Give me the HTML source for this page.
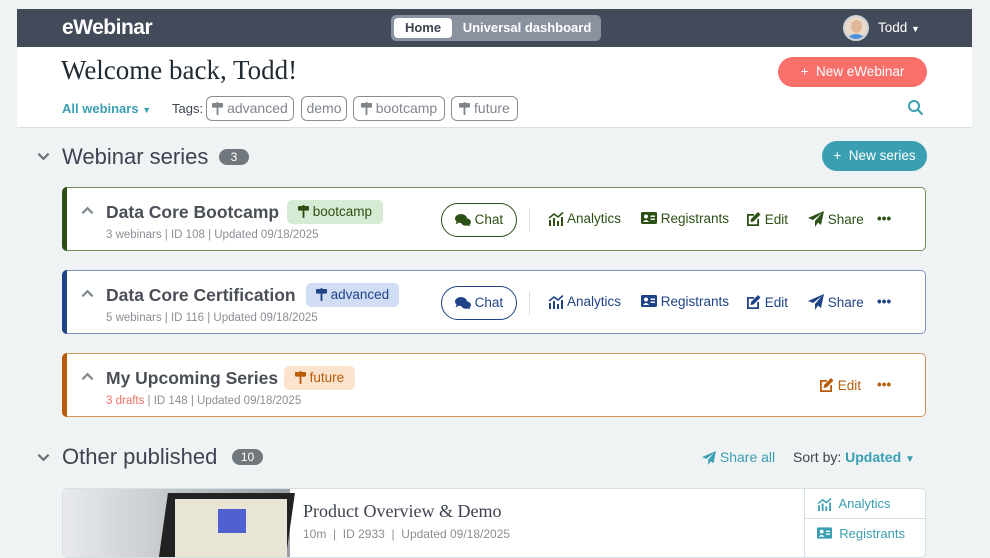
<!DOCTYPE html>
<html><head><meta charset="utf-8"><style>
*{box-sizing:border-box;margin:0;padding:0}
body{width:990px;height:555px;overflow:hidden;background:#eff3f4;font-family:"Liberation Sans",sans-serif;position:relative;color:#3d4350}
.abs{position:absolute}
svg.i{display:inline-block;vertical-align:-3px;fill:currentColor}
.hdr{left:17px;top:9px;width:955px;height:38px;background:#434b5a}
.logo{left:62px;top:16px;color:#fff;font-weight:bold;font-size:21px;letter-spacing:-0.5px}
.tabs{left:391px;top:15px;width:210px;height:26px;background:#8a92a0;border-radius:5px}
.tab{position:absolute;top:3px;height:20px;font-size:13px;line-height:20px;text-align:center;font-weight:bold}
.white{left:17px;top:47px;width:955px;height:81px;background:#fff;border-bottom:1px solid #d5e0e2}
.welcome{left:61px;top:55px;font-family:"Liberation Serif",serif;font-size:27px;color:#1f2a33}
.btn{border-radius:16px;color:#fff;font-size:13.5px;text-align:center}
.tag{top:96px;height:25px;border:1px solid #8a8f95;border-radius:6px;font-size:14px;color:#80868c;line-height:23px;text-align:center}
.sec{font-size:22px;color:#3d4350}
.badge{background:#70787d;color:#fff;border-radius:9px;font-size:12px;text-align:center}
.card{left:62px;width:864px;height:64px;background:#fff;border-radius:5px;border:1px solid}
.card .bar{position:absolute;left:-1px;top:-1px;bottom:-1px;width:5px;border-radius:5px 0 0 5px}
.ttl{position:absolute;left:43px;top:14px;font-size:17.5px;font-weight:bold;color:#4a4f57}
.meta{position:absolute;left:43px;top:41px;font-size:11.5px;color:#8a8f95}
.chev{position:absolute;left:18px;top:18px}
.pill{position:absolute;top:12px;height:24px;border-radius:5px;font-size:13.5px;line-height:24px;text-align:center}
.act{position:absolute;top:23px;font-size:13.5px}
.chat{position:absolute;left:378px;top:15px;width:76px;height:34px;border:1px solid;border-radius:17px;font-size:13.5px;line-height:32px;text-align:center}
.sep{position:absolute;left:466px;top:20px;width:1px;height:24px;background:#d8dde0}
</style></head><body>
<svg width="0" height="0" style="position:absolute">
<defs>
<symbol id="sign" viewBox="0 0 12 14"><rect x="0" y="1" width="12" height="5" rx="1"/><rect x="5" y="0" width="2" height="14"/></symbol>
<symbol id="chat" viewBox="0 0 16 14"><ellipse cx="6" cy="5.5" rx="6" ry="4.5"/><path d="M1.5 8.5 L0.5 11.5 L4 9.5Z"/><ellipse cx="11" cy="9" rx="5" ry="3.8"/><path d="M14 11 L15.5 13.5 L12 12Z"/></symbol>
<symbol id="ana" viewBox="0 0 16 14"><rect x="1" y="8" width="2" height="6"/><rect x="5" y="6" width="2" height="8"/><rect x="9" y="9" width="2" height="5"/><rect x="13" y="5" width="2" height="9"/><path d="M1 6 L6 2 L10 5 L15 0.5" fill="none" stroke="currentColor" stroke-width="1.6"/></symbol>
<symbol id="reg" viewBox="0 0 16 12"><rect x="0" y="0" width="16" height="12" rx="1.5"/><circle cx="5" cy="4.5" r="2" fill="#fff"/><path d="M2 10 Q5 6 8 10Z" fill="#fff"/><rect x="9.5" y="3.5" width="4.5" height="1.4" fill="#fff"/><rect x="9.5" y="6.5" width="4.5" height="1.4" fill="#fff"/></symbol>
<symbol id="edit" viewBox="0 0 16 16"><path d="M2 3h7v1.8H3.8v8.4h8.4V8H14v7H2Z"/><path d="M13 1 L15.5 3.5 L8.5 10.5 L5.5 11 L6 8Z"/></symbol>
<symbol id="send" viewBox="0 0 16 16"><path d="M16 0 L0 7 L5 9 L14 2 L7 10 L7 16 L10 11.5 L13 14Z"/></symbol>
<symbol id="up" viewBox="0 0 14 9"><path d="M1.5 7.5 L7 2 L12.5 7.5" fill="none" stroke="currentColor" stroke-width="2.4"/></symbol>
<symbol id="down" viewBox="0 0 14 9"><path d="M1.5 1.5 L7 7 L12.5 1.5" fill="none" stroke="currentColor" stroke-width="2.4"/></symbol>
</defs></svg>
<div class="abs hdr"></div>
<div class="abs logo">eWebinar</div>
<div class="abs tabs">
 <div class="tab" style="left:3px;width:58px;background:#fff;color:#3d4350;border-radius:4px">Home</div>
 <div class="tab" style="left:66px;width:140px;color:#fff">Universal dashboard</div>
</div>
<div class="abs" style="left:843px;top:15px;width:26px;height:26px;border-radius:50%;background:#e8d9c8;border:2px solid #cfd4d8;overflow:hidden"><div style="position:absolute;left:6px;top:3px;width:11px;height:13px;border-radius:50%;background:#e0b899"></div><div style="position:absolute;bottom:-4px;left:3px;width:16px;height:9px;background:#4a90d9;border-radius:50%"></div></div>
<div class="abs" style="left:878px;top:20px;color:#fff;font-size:13.5px">Todd <span style="font-size:9px">▼</span></div>
<div class="abs white"></div>
<div class="abs welcome">Welcome back, Todd!</div>
<div class="abs btn" style="left:778px;top:57px;width:149px;height:30px;background:#f9706b;line-height:30px;border-radius:15px">+&nbsp; New eWebinar</div>
<div class="abs" style="left:62px;top:101px;font-size:13px;color:#3a9fb2;font-weight:bold">All webinars <span style="font-size:9px">▼</span></div>
<div class="abs" style="left:172px;top:101px;font-size:13px;color:#3d4350">Tags:</div>
<div class="abs tag" style="left:206px;width:88px"><svg class="i" width="11" height="13" style="vertical-align:-2px"><use href="#sign"/></svg> advanced</div>
<div class="abs tag" style="left:301px;width:46px">demo</div>
<div class="abs tag" style="left:353px;width:92px"><svg class="i" width="11" height="13" style="vertical-align:-2px"><use href="#sign"/></svg> bootcamp</div>
<div class="abs tag" style="left:451px;width:67px"><svg class="i" width="11" height="13" style="vertical-align:-2px"><use href="#sign"/></svg> future</div>
<svg class="abs" style="left:907px;top:99px" width="17" height="17" viewBox="0 0 17 17"><circle cx="7" cy="7" r="5" fill="none" stroke="#3a9fb2" stroke-width="2"/><path d="M11 11l4.5 4.5" stroke="#3a9fb2" stroke-width="2.2"/></svg>

<svg class="abs" style="left:37px;top:152px;color:#6b7479" width="13" height="9"><use href="#down"/></svg>
<div class="abs sec" style="left:62px;top:144px">Webinar series</div>
<div class="abs badge" style="left:219px;top:149px;width:30px;height:16px;line-height:16px">3</div>
<div class="abs btn" style="left:822px;top:141px;width:105px;height:30px;background:#3a9fb2;line-height:30px;border-radius:15px">+ &nbsp;New series</div>

<div class="abs card" style="top:187px;border-color:#6e8d5a;color:#2d5016">
 <div class="bar" style="background:#2d5016"></div>
 <svg class="chev" width="13" height="9" style="color:#7d8a8f"><use href="#up"/></svg>
 <div class="ttl">Data Core Bootcamp</div>
 <div class="pill" style="left:224px;width:96px;background:#d6ebd3"><svg class="i" width="11" height="13" style="vertical-align:-2px"><use href="#sign"/></svg> bootcamp</div>
 <div class="meta">3 webinars | ID 108 | Updated 09/18/2025</div>
 <div class="chat"><svg class="i" width="16" height="14"><use href="#chat"/></svg> Chat</div>
 <div class="sep"></div>
 <div class="act" style="left:485px"><svg class="i" width="16" height="14"><use href="#ana"/></svg> Analytics</div>
 <div class="act" style="left:578px"><svg class="i" width="16" height="12" style="vertical-align:-1px"><use href="#reg"/></svg> Registrants</div>
 <div class="act" style="left:682px"><svg class="i" width="16" height="16"><use href="#edit"/></svg> Edit</div>
 <div class="act" style="left:745px"><svg class="i" width="16" height="16"><use href="#send"/></svg> Share</div>
 <div class="act" style="left:814px;font-weight:bold">•••</div>
</div>
<div class="abs card" style="top:270px;border-color:#7c93bd;color:#1e4387">
 <div class="bar" style="background:#1e4387"></div>
 <svg class="chev" width="13" height="9" style="color:#7d8a8f"><use href="#up"/></svg>
 <div class="ttl">Data Core Certification</div>
 <div class="pill" style="left:243px;width:93px;background:#d1ddf5"><svg class="i" width="11" height="13" style="vertical-align:-2px"><use href="#sign"/></svg> advanced</div>
 <div class="meta">5 webinars | ID 116 | Updated 09/18/2025</div>
 <div class="chat"><svg class="i" width="16" height="14"><use href="#chat"/></svg> Chat</div>
 <div class="sep"></div>
 <div class="act" style="left:485px"><svg class="i" width="16" height="14"><use href="#ana"/></svg> Analytics</div>
 <div class="act" style="left:578px"><svg class="i" width="16" height="12" style="vertical-align:-1px"><use href="#reg"/></svg> Registrants</div>
 <div class="act" style="left:682px"><svg class="i" width="16" height="16"><use href="#edit"/></svg> Edit</div>
 <div class="act" style="left:745px"><svg class="i" width="16" height="16"><use href="#send"/></svg> Share</div>
 <div class="act" style="left:814px;font-weight:bold">•••</div>
</div>
<div class="abs card" style="top:353px;border-color:#d39457;color:#b85c0a">
 <div class="bar" style="background:#b85c0a"></div>
 <svg class="chev" width="13" height="9" style="color:#7d8a8f"><use href="#up"/></svg>
 <div class="ttl">My Upcoming Series</div>
 <div class="pill" style="left:221px;width:71px;background:#fbe3cd"><svg class="i" width="11" height="13" style="vertical-align:-2px"><use href="#sign"/></svg> future</div>
 <div class="meta"><span style="color:#f27068">3 drafts</span> | ID 148 | Updated 09/18/2025</div>
 <div class="act" style="left:755px"><svg class="i" width="16" height="16"><use href="#edit"/></svg> Edit</div>
 <div class="act" style="left:814px;font-weight:bold">•••</div>
</div>

<svg class="abs" style="left:37px;top:453px;color:#6b7479" width="13" height="9"><use href="#down"/></svg>
<div class="abs sec" style="left:62px;top:444px">Other published</div>
<div class="abs badge" style="left:232px;top:449px;width:31px;height:16px;line-height:16px">10</div>
<div class="abs" style="left:702px;top:449px;font-size:14px;color:#3a9fb2"><svg class="i" width="14" height="14"><use href="#send"/></svg> Share all</div>
<div class="abs" style="left:793px;top:449px;font-size:14px;color:#3d4350">Sort by: <b style="color:#3a9fb2">Updated</b> <span style="color:#3a9fb2;font-size:10px">▼</span></div>

<div class="abs" style="left:62px;top:488px;width:864px;height:70px;background:#fff;border:1px solid #d5e0e2;border-radius:5px;overflow:hidden">
 <div style="position:absolute;left:0;top:0;width:227px;height:70px;background:linear-gradient(90deg,#e8eaec,#c9cdd0 40%,#9aa0a5)">
  <div style="position:absolute;left:100px;top:4px;width:127px;height:70px;background:#222;transform:skewX(-8deg)"></div>
  <div style="position:absolute;left:112px;top:10px;width:112px;height:60px;background:#e9e5d5"></div>
  <div style="position:absolute;left:155px;top:20px;width:28px;height:24px;background:#2b3fd0;opacity:.8"></div>
 </div>
 <div style="position:absolute;left:240px;top:12px;font-family:'Liberation Serif',serif;font-size:18px;color:#3d4350">Product Overview &amp; Demo</div>
 <div style="position:absolute;left:240px;top:38px;font-size:12px;color:#8a8f95">10m &nbsp;| &nbsp;ID 2933 &nbsp;| &nbsp;Updated 09/18/2025</div>
 <div style="position:absolute;left:741px;top:0;width:123px;height:70px;border-left:1px solid #d5e0e2;color:#3a9fb2">
  <div style="height:30px;border-bottom:1px solid #d5e0e2;padding:7px 0 0 12px;font-size:13px"><svg class="i" width="15" height="13"><use href="#ana"/></svg>&nbsp; Analytics</div>
  <div style="padding:7px 0 0 12px;font-size:13px"><svg class="i" width="15" height="12" style="vertical-align:-1px"><use href="#reg"/></svg>&nbsp; Registrants</div>
 </div>
</div>
</body></html>
